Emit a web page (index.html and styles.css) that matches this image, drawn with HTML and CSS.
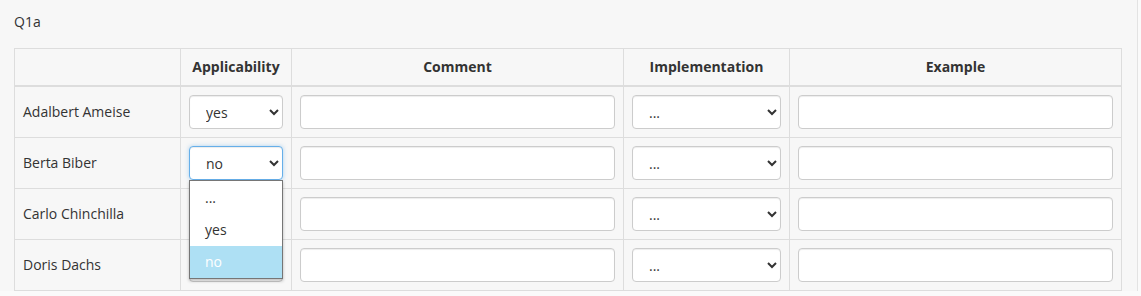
FILE: index.html
```html
<!DOCTYPE html>
<html lang="en">

<head>
    <meta charset="UTF-8">
    <meta name="viewport" content="width=device-width, initial-scale=1.0">
    <title>Q1a</title>
    <link rel="stylesheet" href="styles.css">
</head>

<body>
<div class="panel">
    <div class="question">Q1a</div>

    <table class="grid">
        <colgroup>
            <col class="col-name">
            <col class="col-app">
            <col class="col-comment">
            <col class="col-impl">
            <col class="col-example">
        </colgroup>
        <thead>
        <tr>
            <th></th>
            <th>Applicability</th>
            <th>Comment</th>
            <th>Implementation</th>
            <th>Example</th>
        </tr>
        </thead>
        <tbody>
        <tr>
            <td class="name">Adalbert Ameise</td>
            <td>
                <select class="form-control">
                    <option>...</option>
                    <option selected>yes</option>
                    <option>no</option>
                </select>
            </td>
            <td><input type="text" class="form-control"></td>
            <td>
                <select class="form-control">
                    <option selected>...</option>
                    <option>yes</option>
                    <option>no</option>
                </select>
            </td>
            <td><input type="text" class="form-control"></td>
        </tr>
        <tr>
            <td class="name">Berta Biber</td>
            <td>
                <div class="select-wrap">
                    <select class="form-control focused">
                        <option>...</option>
                        <option>yes</option>
                        <option selected>no</option>
                    </select>
                    <!-- the opened option list -->
                    <ul class="dropdown">
                        <li>...</li>
                        <li>yes</li>
                        <li class="active">no</li>
                    </ul>
                </div>
            </td>
            <td><input type="text" class="form-control"></td>
            <td>
                <select class="form-control">
                    <option selected>...</option>
                    <option>yes</option>
                    <option>no</option>
                </select>
            </td>
            <td><input type="text" class="form-control"></td>
        </tr>
        <tr>
            <td class="name">Carlo Chinchilla</td>
            <td>
                <select class="form-control">
                    <option selected>...</option>
                    <option>yes</option>
                    <option>no</option>
                </select>
            </td>
            <td><input type="text" class="form-control"></td>
            <td>
                <select class="form-control">
                    <option selected>...</option>
                    <option>yes</option>
                    <option>no</option>
                </select>
            </td>
            <td><input type="text" class="form-control"></td>
        </tr>
        <tr>
            <td class="name">Doris Dachs</td>
            <td>
                <select class="form-control">
                    <option selected>...</option>
                    <option>yes</option>
                    <option>no</option>
                </select>
            </td>
            <td><input type="text" class="form-control"></td>
            <td>
                <select class="form-control">
                    <option selected>...</option>
                    <option>yes</option>
                    <option>no</option>
                </select>
            </td>
            <td><input type="text" class="form-control"></td>
        </tr>
        </tbody>
    </table>
</div>
</body>

</html>
```

FILE: styles.css
```css
body {
    font-family: 'Open Sans', 'Liberation Sans', sans-serif;
    font-size: 14px;
    color: #333;
    background-color: #fafafa;
    margin: 0;
}

.panel {
    width: 1108px;
    padding: 12px 15px 0 14px;
    background-color: #f7f7f7;
    border-right: 1px solid #e3e3e3;
}

.question {
    line-height: 20px;
    margin-bottom: 16px;
}

.grid {
    width: 100%;
    border-collapse: collapse;
    table-layout: fixed;
}

.col-name {
    width: 166px;
}

.col-app {
    width: 111px;
}

.col-comment {
    width: 332px;
}

.col-impl {
    width: 166px;
}

.grid th,
.grid td {
    border: 1px solid #ddd;
    padding: 8px;
    line-height: 20px;
    vertical-align: middle;
}

.grid th {
    font-weight: bold;
    text-align: center;
    border-bottom: 2px solid #ddd;
}

.form-control {
    display: block;
    width: 100%;
    height: 34px;
    padding: 6px 12px;
    box-sizing: border-box;
    font-family: inherit;
    font-size: 14px;
    color: #555;
    background-color: #fff;
    border: 1px solid #ccc;
    border-radius: 4px;
    box-shadow: inset 0 1px 1px rgba(0, 0, 0, 0.075);
}

select.form-control {
    color: #333;
}

.form-control.focused {
    border-color: #66afe9;
    outline: 0;
    box-shadow: inset 0 1px 1px rgba(0, 0, 0, .075), 0 0 4px rgba(102, 175, 233, 0.5);
}

.select-wrap {
    position: relative;
}

.dropdown {
    position: absolute;
    top: 100%;
    left: 0;
    right: 0;
    z-index: 10;
    margin: 0;
    padding: 1px 0 0;
    list-style: none;
    background-color: #fff;
    border: 1px solid #767676;
    box-shadow: 0 2px 3px rgba(0, 0, 0, 0.25);
}

.dropdown li {
    height: 32px;
    line-height: 32px;
    padding-left: 15px;
    color: #333;
}

.dropdown li.active {
    background-color: #aee0f4;
    color: #fff;
}
```
